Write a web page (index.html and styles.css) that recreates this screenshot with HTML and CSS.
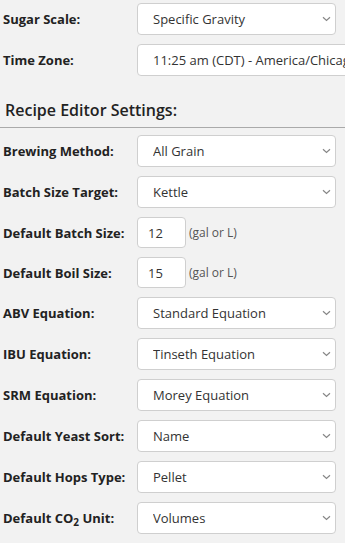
FILE: index.html
```html
<!DOCTYPE html>
<html lang="en">
<head>
    <meta charset="UTF-8">
    <meta name="viewport" content="width=device-width, initial-scale=1.0">
    <title>Account Settings</title>
    <link rel="stylesheet" href="styles.css">
</head>
<body>
    <div class="settings">
        <div class="row">
            <label for="sugar-scale">Sugar Scale:</label>
            <select id="sugar-scale">
                <option>Specific Gravity</option>
                <option>Plato</option>
                <option>Brix</option>
            </select>
        </div>
        <div class="row">
            <label for="time-zone">Time Zone:</label>
            <div class="clip">
                <select id="time-zone" class="wide">
                    <option>11:25 am (CDT) - America/Chicago</option>
                </select>
            </div>
        </div>

        <h2>Recipe Editor Settings:</h2>

        <div class="row">
            <label for="brew-method">Brewing Method:</label>
            <select id="brew-method">
                <option>All Grain</option>
                <option>BIAB</option>
                <option>Partial Mash</option>
                <option>Extract</option>
            </select>
        </div>
        <div class="row">
            <label for="batch-target">Batch Size Target:</label>
            <select id="batch-target">
                <option>Kettle</option>
                <option>Fermentor</option>
            </select>
        </div>
        <div class="row small">
            <label for="batch-size">Default Batch Size:</label>
            <input type="text" id="batch-size" value="12">
            <span class="unit">(gal or L)</span>
        </div>
        <div class="row small">
            <label for="boil-size">Default Boil Size:</label>
            <input type="text" id="boil-size" value="15">
            <span class="unit">(gal or L)</span>
        </div>
        <div class="row">
            <label for="abv-eq">ABV Equation:</label>
            <select id="abv-eq">
                <option>Standard Equation</option>
                <option>Alternate Equation</option>
            </select>
        </div>
        <div class="row">
            <label for="ibu-eq">IBU Equation:</label>
            <select id="ibu-eq">
                <option>Tinseth Equation</option>
                <option>Rager Equation</option>
            </select>
        </div>
        <div class="row">
            <label for="srm-eq">SRM Equation:</label>
            <select id="srm-eq">
                <option>Morey Equation</option>
                <option>Daniels Equation</option>
            </select>
        </div>
        <div class="row">
            <label for="yeast-sort">Default Yeast Sort:</label>
            <select id="yeast-sort">
                <option>Name</option>
                <option>Lab</option>
            </select>
        </div>
        <div class="row">
            <label for="hops-type">Default Hops Type:</label>
            <select id="hops-type">
                <option>Pellet</option>
                <option>Leaf</option>
            </select>
        </div>
        <div class="row">
            <label for="co2-unit">Default CO<sub>2</sub> Unit:</label>
            <select id="co2-unit">
                <option>Volumes</option>
                <option>Grams per Liter</option>
            </select>
        </div>
    </div>
</body>
</html>
```

FILE: styles.css
```css
* {
    box-sizing: border-box;
}

body {
    margin: 0;
    padding: 0;
    background-color: #f2f2f2;
    font-family: "Open Sans", "Liberation Sans", sans-serif;
    color: #222;
    overflow: hidden;
}

.settings {
    padding-top: 3px;
}

.row {
    display: flex;
    align-items: center;
    padding-left: 3px;
    margin-bottom: 9px;
    white-space: nowrap;
}

.row label {
    flex: 0 0 134px;
    font-size: 13px;
    font-weight: 700;
    color: #222;
}

.row sub {
    font-size: 10px;
    line-height: 0;
    vertical-align: -3px;
}

select {
    -webkit-appearance: none;
    appearance: none;
    flex: 0 0 199px;
    width: 199px;
    height: 32px;
    padding: 0 24px 0 15px;
    border: 1px solid #cfcfcf;
    border-radius: 4px;
    background-color: #fff;
    background-image: url("data:image/svg+xml,%3Csvg xmlns='http://www.w3.org/2000/svg' width='9' height='6' viewBox='0 0 9 6'%3E%3Cpath d='M1 1.2l3.5 3.3 3.5-3.3' fill='none' stroke='%23888' stroke-width='1.2'/%3E%3C/svg%3E");
    background-repeat: no-repeat;
    background-position: right 4px center;
    font-family: "Open Sans", "Liberation Sans", sans-serif;
    font-size: 13px;
    color: #333;
}

/* time zone select runs past the edge, so clip it inside a box */
.clip {
    flex: 1;
    min-width: 0;
    overflow: hidden;
}

select.wide {
    display: block;
    width: 240px;
    padding-right: 4px;
    background-image: none;
}

input[type="text"] {
    width: 49px;
    height: 31px;
    padding: 0 10px;
    border: 1px solid #cfcfcf;
    border-radius: 4px;
    background: #fff;
    font-family: "Open Sans", "Liberation Sans", sans-serif;
    font-size: 13px;
    color: #333;
}

.unit {
    margin-left: 3px;
    font-size: 12px;
    color: #555;
}

h2 {
    margin: 22px 0 7px;
    padding: 0 0 5px 5px;
    line-height: 24px;
    font-size: 16px;
    font-weight: 600;
    color: #222;
    border-bottom: 1px solid #aaa;
}
```
